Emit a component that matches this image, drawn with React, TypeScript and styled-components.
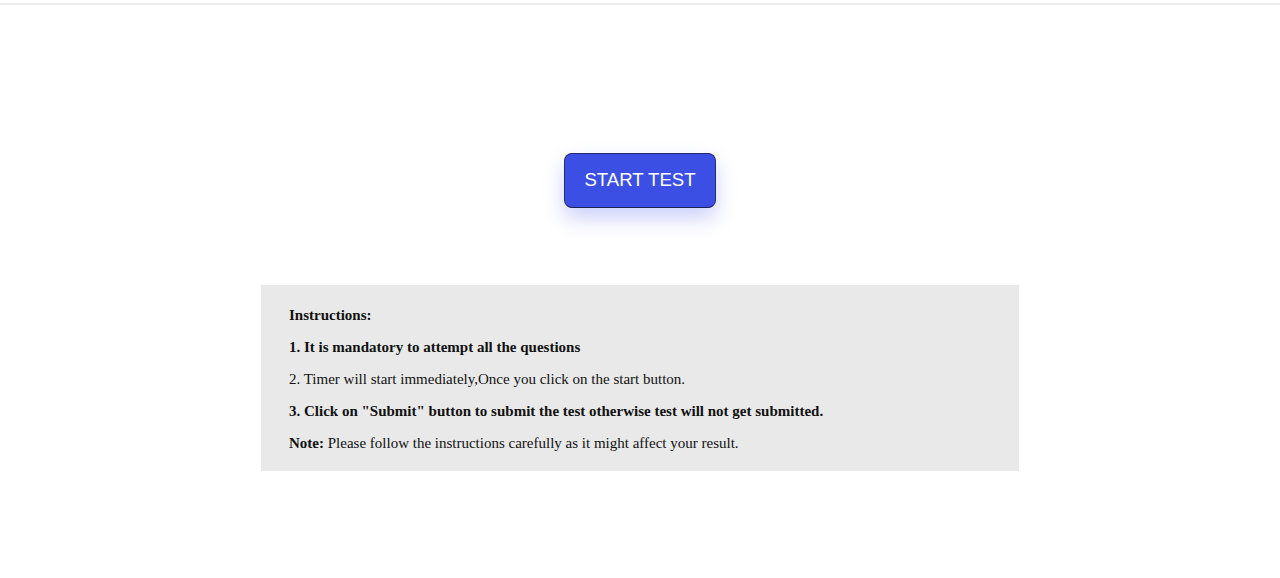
import React from "react";
import styled, { createGlobalStyle } from "styled-components";

const Global = createGlobalStyle`
  html, body { margin: 0; padding: 0; background: #ffffff; }
  body { font-family: "Liberation Serif", "Times New Roman", serif; }
`;

const TopRule = styled.div`
  margin-top: 3px;
  height: 2px;
  background: #ebebeb;
`;

const Page = styled.main`
  display: flex;
  flex-direction: column;
  align-items: center;
  padding-top: 148px;
`;

const StartButton = styled.button`
  box-sizing: border-box;
  white-space: nowrap;
  font-family: "Liberation Sans", Arial, sans-serif;
  font-size: 18.6px;
  line-height: 23px;
  color: #ffffff;
  background: #3b4fe4;
  border: 1px solid #262c6e;
  border-bottom-color: #1e2250;
  border-radius: 8px;
  padding: 14px 0 16px;
  width: 152px;
  box-shadow: 0 10px 20px rgba(70, 85, 235, 0.28);
  cursor: pointer;
`;

const InstructionBox = styled.section`
  margin-top: 77px;
  width: 758px;
  box-sizing: border-box;
  background: #e9e9e9;
  padding: 7px 28px 4px;
  color: #111;
`;

const Line = styled.p<{ $bold?: boolean }>`
  margin: 15px 0;
  font-size: 15px;
  line-height: 17px;
  font-weight: ${(p) => (p.$bold ? 700 : 400)};
`;

export default function App() {
  return (
    <>
      <Global />
      <TopRule />
      <Page>
        <StartButton>START TEST</StartButton>
        <InstructionBox>
          <Line $bold>Instructions:</Line>
          <Line $bold>1. It is mandatory to attempt all the questions</Line>
          <Line>2. Timer will start immediately,Once you click on the start button.</Line>
          <Line $bold>
            3. Click on "Submit" button to submit the test otherwise test will not get submitted.
          </Line>
          <Line>
            <b>Note:</b> Please follow the instructions carefully as it might affect your result.
          </Line>
        </InstructionBox>
      </Page>
    </>
  );
}
